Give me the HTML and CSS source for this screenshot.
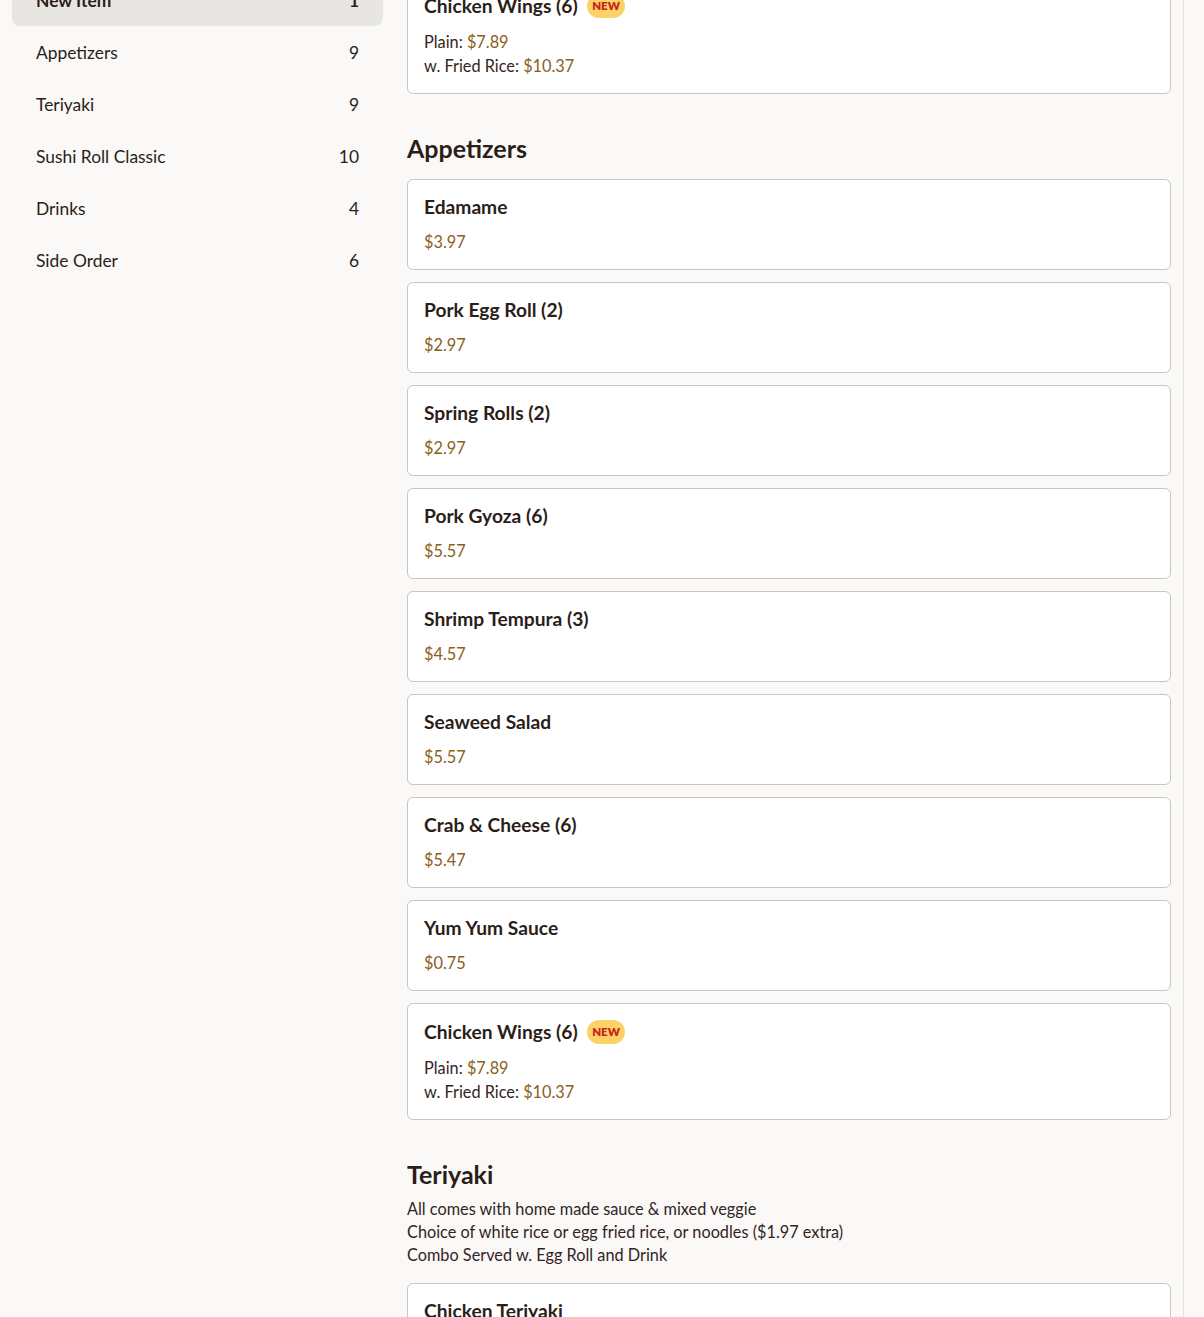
FILE: index.html
```html
<!DOCTYPE html>
<html lang="en">
<head>
  <meta charset="UTF-8">
  <meta name="viewport" content="width=device-width, initial-scale=1.0">
  <title>Menu</title>
  <link rel="stylesheet" href="styles.css">
</head>
<body>
  <div class="page">
    <!-- Category list -->
    <aside class="sidebar">
      <a class="cat active" href="#new"><span>New Item</span><span>1</span></a>
      <a class="cat" href="#appetizers"><span>Appetizers</span><span>9</span></a>
      <a class="cat" href="#teriyaki"><span>Teriyaki</span><span>9</span></a>
      <a class="cat" href="#sushi"><span>Sushi Roll Classic</span><span>10</span></a>
      <a class="cat" href="#drinks"><span>Drinks</span><span>4</span></a>
      <a class="cat" href="#side"><span>Side Order</span><span>6</span></a>
    </aside>

    <!-- Menu sections -->
    <main class="menu">
      <section class="section" id="new">
        <h2 class="section-title">New Item</h2>
        <div class="items">
          <div class="item">
            <div class="item-head"><h3 class="item-name">Chicken Wings (6)</h3><span class="badge">NEW</span></div>
            <div class="price-row">Plain: <span class="price">$7.89</span></div>
            <div class="price-row">w. Fried Rice: <span class="price">$10.37</span></div>
          </div>
        </div>
      </section>

      <section class="section" id="appetizers">
        <h2 class="section-title">Appetizers</h2>
        <div class="items">
          <div class="item">
            <div class="item-head"><h3 class="item-name">Edamame</h3></div>
            <div class="price-row"><span class="price">$3.97</span></div>
          </div>
          <div class="item">
            <div class="item-head"><h3 class="item-name">Pork Egg Roll (2)</h3></div>
            <div class="price-row"><span class="price">$2.97</span></div>
          </div>
          <div class="item">
            <div class="item-head"><h3 class="item-name">Spring Rolls (2)</h3></div>
            <div class="price-row"><span class="price">$2.97</span></div>
          </div>
          <div class="item">
            <div class="item-head"><h3 class="item-name">Pork Gyoza (6)</h3></div>
            <div class="price-row"><span class="price">$5.57</span></div>
          </div>
          <div class="item">
            <div class="item-head"><h3 class="item-name">Shrimp Tempura (3)</h3></div>
            <div class="price-row"><span class="price">$4.57</span></div>
          </div>
          <div class="item">
            <div class="item-head"><h3 class="item-name">Seaweed Salad</h3></div>
            <div class="price-row"><span class="price">$5.57</span></div>
          </div>
          <div class="item">
            <div class="item-head"><h3 class="item-name">Crab &amp; Cheese (6)</h3></div>
            <div class="price-row"><span class="price">$5.47</span></div>
          </div>
          <div class="item">
            <div class="item-head"><h3 class="item-name">Yum Yum Sauce</h3></div>
            <div class="price-row"><span class="price">$0.75</span></div>
          </div>
          <div class="item">
            <div class="item-head"><h3 class="item-name">Chicken Wings (6)</h3><span class="badge">NEW</span></div>
            <div class="price-row">Plain: <span class="price">$7.89</span></div>
            <div class="price-row">w. Fried Rice: <span class="price">$10.37</span></div>
          </div>
        </div>
      </section>

      <section class="section" id="teriyaki">
        <h2 class="section-title">Teriyaki</h2>
        <p class="section-desc">All comes with home made sauce &amp; mixed veggie<br>Choice of white rice or egg fried rice, or noodles ($1.97 extra)<br>Combo Served w. Egg Roll and Drink</p>
        <div class="items">
          <div class="item">
            <div class="item-head"><h3 class="item-name">Chicken Teriyaki</h3></div>
            <div class="price-row"><span class="price">$9.97</span></div>
          </div>
        </div>
      </section>
    </main>
  </div>
</body>
</html>
```

FILE: styles.css
```css
body {
  margin: 0;
  padding: 0;
  background-color: #faf9f7;
  color: #2b1e19;
  font-family: Lato, "Noto Sans", sans-serif;
  overflow: hidden;
}
.page {
  display: grid;
  grid-template-columns: 371px 1fr;
  gap: 24px;
  align-items: start;
  width: 1184px;
  box-sizing: border-box;
  padding: 0 12px;
  margin-top: -70px;
  border-right: 1px solid #e4e2de;
}
.sidebar {
  display: flex;
  flex-direction: column;
  padding-top: 44px;
}
.cat {
  display: flex;
  justify-content: space-between;
  align-items: center;
  height: 52px;
  padding: 0 24px;
  border-radius: 8px;
  color: #2b1e19;
  text-decoration: none;
  font-size: 17.4px;
}
.cat.active {
  background-color: #e7e6e2;
  font-weight: 700;
}
.menu {
  display: flex;
  flex-direction: column;
  gap: 38px;
}
.section-title {
  margin: 0 0 7px;
  font-size: 25px;
  line-height: 32px;
  font-weight: 700;
}
.section-desc {
  margin: 0 0 17px;
  font-size: 16.3px;
  line-height: 23px;
  color: #33241e;
}
.items {
  display: flex;
  flex-direction: column;
  gap: 12px;
  margin-top: 15px;
}
.item {
  background-color: #fff;
  border: 1px solid #c9c6c1;
  border-radius: 6px;
  padding: 16px 16px 15px;
}
.item-head {
  display: flex;
  align-items: center;
  gap: 9px;
  min-height: 22px;
  margin-bottom: 12px;
}
.item-name {
  margin: 0;
  font-size: 19.2px;
  line-height: 22px;
  font-weight: 700;
}
.badge {
  display: inline-block;
  padding: 0 5.5px;
  height: 24px;
  line-height: 24px;
  border-radius: 12px;
  background-color: #fcd267;
  color: #c3271a;
  font-size: 11.5px;
  font-weight: 800;
}
.price-row {
  font-size: 16.3px;
  line-height: 24px;
  color: #33241e;
}
.price {
  color: #8a6020;
}
```
